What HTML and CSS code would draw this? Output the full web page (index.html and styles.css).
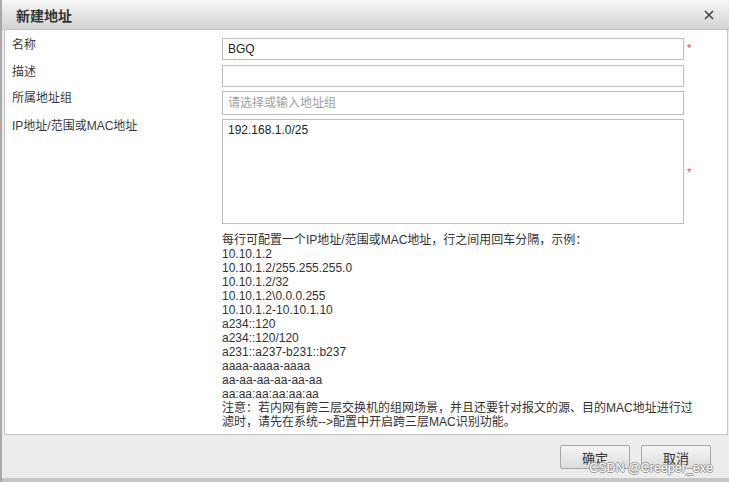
FILE: index.html
```html
<!DOCTYPE html>
<html>
<head>
<meta charset="utf-8" />
<title>新建地址</title>
<link rel="stylesheet" href="styles.css">
</head>
<body>
<div class="dialog">
	<div class="dialog-title">
		<span class="title-text">新建地址</span>
		<a href="javascript:;" class="close"><svg width="10" height="10" viewBox="0 0 10 10"><path d="M1 1L9 9M9 1L1 9" stroke="#444" stroke-width="1.6" fill="none"/></svg></a>
	</div>
	<div class="dialog-body">
		<div class="row">
			<label class="label">名称</label>
			<input type="text" class="field" value="BGQ">
			<span class="req">*</span>
		</div>
		<div class="row">
			<label class="label">描述</label>
			<input type="text" class="field">
		</div>
		<div class="row">
			<label class="label">所属地址组</label>
			<input type="text" class="field field-tall" placeholder="请选择或输入地址组">
		</div>
		<div class="row row-area">
			<label class="label">IP地址/范围或MAC地址</label>
			<textarea class="field area">192.168.1.0/25</textarea>
			<span class="req">*</span>
		</div>
		<div class="help">
			<p>每行可配置一个IP地址/范围或MAC地址，行之间用回车分隔，示例：</p>
			<p>10.10.1.2</p>
			<p>10.10.1.2/255.255.255.0</p>
			<p>10.10.1.2/32</p>
			<p>10.10.1.2\0.0.0.255</p>
			<p>10.10.1.2-10.10.1.10</p>
			<p>a234::120</p>
			<p>a234::120/120</p>
			<p>a231::a237-b231::b237</p>
			<p>aaaa-aaaa-aaaa</p>
			<p>aa-aa-aa-aa-aa-aa</p>
			<p>aa:aa:aa:aa:aa:aa</p>
			<p>注意：若内网有跨三层交换机的组网场景，并且还要针对报文的源、目的MAC地址进行过滤时，请先在系统--&gt;配置中开启跨三层MAC识别功能。</p>
		</div>
	</div>
	<div class="dialog-foot">
		<a href="javascript:;" class="btn">确定</a>
		<a href="javascript:;" class="btn">取消</a>
		<span class="watermark">CSDN @Creeper_exe</span>
	</div>
</div>
</body>
</html>
```

FILE: styles.css
```css
*{margin:0;padding:0;box-sizing:border-box;}
body{font-family:"Liberation Sans","Noto Sans CJK SC",sans-serif;font-size:12px;color:#333;background:#fff;}
a{text-decoration:none;color:#333;}

.dialog{width:729px;height:482px;border-left:2px solid #a9a9a9;display:flex;flex-direction:column;background:#ececec;}
.dialog-title{height:30px;flex:none;display:flex;align-items:center;justify-content:space-between;padding:0 15px 0 14px;background:linear-gradient(#f7f7f7,#d3d3d3);border-bottom:1px solid #c4c4c4;}
.title-text{font-size:14px;font-weight:bold;color:#333;}
.close{display:flex;width:10px;height:10px;}

.dialog-body{height:405px;flex:none;margin:0 1px 0 2px;background:#fff;border:1px solid #c4c4c4;border-top:0;padding:8px 0 0 7px;}
.row{display:flex;align-items:flex-start;margin-bottom:4px;}
.row:first-child{margin-bottom:5px;}
.label{width:210px;flex:none;line-height:14px;color:#3a3a3a;}
.field{width:462px;height:22px;border:1px solid #bcbcc2;font-family:"Liberation Sans","Noto Sans CJK SC",sans-serif;font-size:12px;color:#222;padding:0 5px;outline:none;background:#fff;}
.field-tall{height:24px;}
.field::placeholder{color:#a0a0a0;}
.area{height:105px;resize:none;padding:3px 5px;line-height:14px;display:block;}
.req{color:#f2366c;font-size:11px;margin-left:3px;align-self:center;line-height:10px;margin-top:-3px;}
.row-area .req{margin-top:0;}

.help{margin:9px 0 0 210px;width:476px;line-height:14px;color:#333;}

.dialog-foot{flex:1;position:relative;display:flex;justify-content:flex-end;align-items:flex-start;gap:11px;padding:10px 18px 0 0;border-bottom:4px solid #c6c6c6;}
.btn{width:70px;height:24px;display:flex;align-items:center;justify-content:center;font-size:13px;color:#333;border:1px solid #a7a7a7;border-radius:2px;background:linear-gradient(#f5f5f5,#dcdcdc);}
.watermark{position:absolute;right:16px;bottom:3px;font-size:12.5px;color:#fff;text-shadow:-1px 0 0 #9a9a9a,1px 0 0 #9a9a9a,0 -1px 0 #9a9a9a,0 1px 0 #9a9a9a;}
```
